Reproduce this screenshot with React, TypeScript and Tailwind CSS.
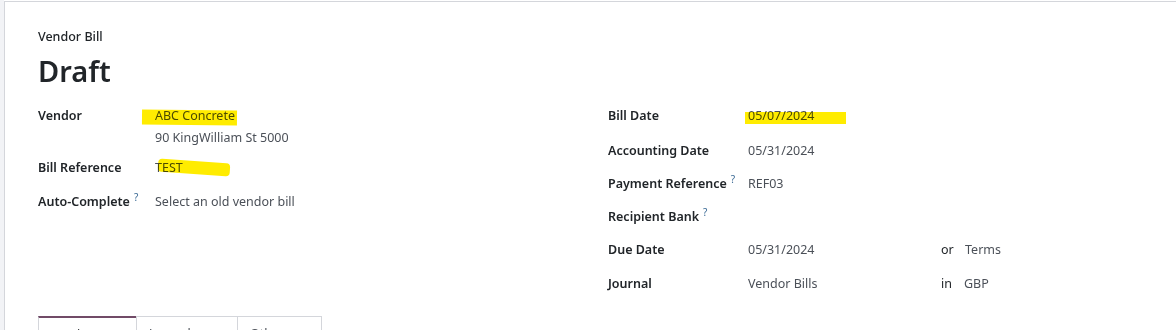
import React from "react";

const font = { fontFamily: '"Noto Sans", "Open Sans", Arial, sans-serif' };

function Hint() {
  return <sup className="ml-1 text-[10px] font-normal text-[#3b6a95]">?</sup>;
}

function Field({
  label,
  hint = false,
  labelW,
  className = "h-[33px]",
  children,
}: {
  label: string;
  hint?: boolean;
  labelW: string;
  className?: string;
  children?: React.ReactNode;
}) {
  return (
    <div className={`flex ${className}`}>
      <div className={`${labelW} shrink-0 font-semibold text-[#212529]`}>
        {label}
        {hint && <Hint />}
      </div>
      <div className="flex-1 text-[#4b5058]">{children}</div>
    </div>
  );
}

function Marker({ className }: { className: string }) {
  return <span className={`pointer-events-none absolute bg-[#ffec00] mix-blend-multiply ${className}`} />;
}

export default function App() {
  return (
    <div className="flex h-[330px] overflow-hidden bg-white text-[12.5px] leading-[22px]" style={font}>
      <div className="w-[4px] shrink-0 bg-[#f2f3f6]" />
      <div className="mt-[1px] flex-1 border-l border-t border-[#d4d6db] bg-white pl-[33px] pt-[24px]">
        <p className="font-medium text-[#212529]">Vendor Bill</p>
        <h1 className="mt-[2px] text-[29px] font-semibold leading-[42px] text-[#212529]">Draft</h1>

        <div className="mt-[13px] flex">
          <div className="w-[570px] shrink-0">
            <Field label="Vendor" labelW="w-[117px]" className="h-[52px]">
              <span className="relative">
                ABC Concrete
                <Marker className="left-[-13px] right-[-2px] top-[3px] h-[15px] rotate-[0.5deg]" />
              </span>
              <br />
              90 KingWilliam St 5000
            </Field>
            <Field label="Bill Reference" labelW="w-[117px]" className="h-[34px]">
              <span className="relative">
                TEST
                <Marker className="left-[3px] w-[72px] top-[2px] h-[13px] rotate-[4deg] rounded-sm" />
              </span>
            </Field>
            <Field label="Auto-Complete" hint labelW="w-[117px]">
              Select an old vendor bill
            </Field>
          </div>

          <div className="flex-1">
            <Field label="Bill Date" labelW="w-[140px]" className="h-[35px]">
              <span className="relative">
                05/07/2024
                <Marker className="left-[-3px] w-[101px] top-[5px] h-[12px]" />
              </span>
            </Field>
            <Field label="Accounting Date" labelW="w-[140px]">
              05/31/2024
            </Field>
            <Field label="Payment Reference" hint labelW="w-[140px]">
              REF03
            </Field>
            <Field label="Recipient Bank" hint labelW="w-[140px]" />
            <Field label="Due Date" labelW="w-[140px]" className="h-[34px]">
              <div className="flex">
                <span className="w-[193px]">05/31/2024</span>
                <span className="w-[24px] text-[#212529]">or</span>
                <span>Terms</span>
              </div>
            </Field>
            <Field label="Journal" labelW="w-[140px]">
              <div className="flex">
                <span className="w-[193px]">Vendor Bills</span>
                <span className="w-[23px] text-[#212529]">in</span>
                <span>GBP</span>
              </div>
            </Field>
          </div>
        </div>

        <div className="mt-[10px] flex">
          {[
            { name: "Invoice Lines", w: "w-[99px]", active: true },
            { name: "Journal Items", w: "w-[102px]", active: false },
            { name: "Other Info", w: "w-[85px]", active: false },
          ].map((t) => (
            <div
              key={t.name}
              className={`${t.w} -ml-px border px-3 pt-[6px] first:ml-0 ${
                t.active
                  ? "border-[#d4d6db] border-t-[#714b67] border-t-2 text-[#212529]"
                  : "border-[#d4d6db] text-[#4b5058]"
              }`}
            >
              {t.name}
            </div>
          ))}
        </div>
      </div>
    </div>
  );
}
